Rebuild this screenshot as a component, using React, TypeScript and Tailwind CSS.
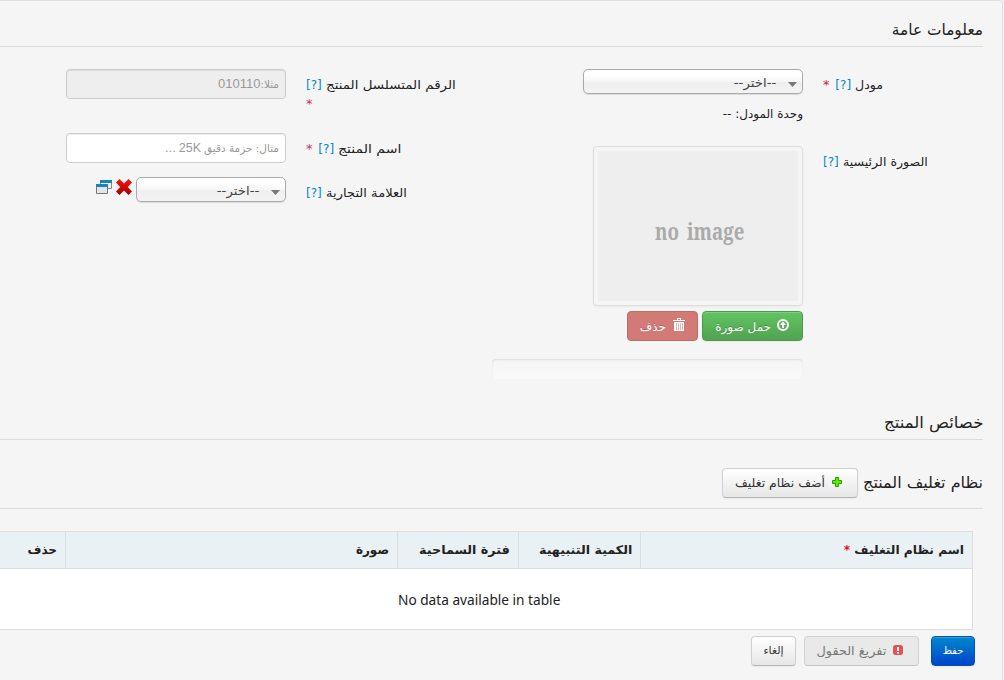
import type { ReactNode } from "react";

function Txt({ children, className = "" }: { children: ReactNode; className?: string }) {
  return <span className={`inline-block whitespace-nowrap ${className}`}>{children}</span>;
}

function Help() {
  return <a className="text-[#0088cc]">[?]</a>;
}

function Star() {
  return <span className="text-[#d8181c]">*</span>;
}

function Select({ className }: { className: string }) {
  return (
    <div
      className={`flex h-[25px] items-center gap-[12px] rounded-[5px] border border-[#aaa] bg-[linear-gradient(#fff_20%,#f6f6f6_50%,#eee_52%,#f4f4f4_100%)] pt-[2px] pr-[5px] text-[#444] shadow-[0_1px_1px_rgba(0,0,0,0.1)] ${className}`}
    >
      <svg width="9" height="5" viewBox="0 0 9 5" className="mt-[3px]">
        <path d="M0 0h9L4.5 5z" fill="#777" />
      </svg>
      <Txt className="origin-right scale-x-[1.11] text-[12px]">--اختر--</Txt>
    </div>
  );
}

export default function App() {
  return (
    <div dir="rtl" className="flex h-[680px] w-[1004px] justify-end overflow-hidden bg-[#f5f5f5] font-['DejaVu_Sans',sans-serif] text-[12px] leading-5 text-[#222]">
      <main className="flex w-[1003px] shrink-0 flex-col rounded-tr-[4px] border-t border-r border-[#e0e0e0]">
        <h2 className="mr-[19px] flex h-[46px] items-center border-b border-[#dcdcdc] pt-[12px] text-[16px]">
          <Txt className="origin-right scale-x-[0.96]">معلومات عامة</Txt>
        </h2>

        <div className="mr-[19px] flex h-[353px] pt-[22px]">
          <section className="flex w-[517px] flex-col">
            <div className="flex h-[77px] gap-5">
              <div dir="ltr" className="w-[160px] pt-[6px]">
                <Txt><span dir="rtl"><Txt className="origin-left scale-x-[1.05]">مودل</Txt> <Help /> <span className="mr-[2px] text-[13px]"><Star /></span></span></Txt>
              </div>
              <div>
                <Select className="w-[220px]" />
                <div className="mt-[10px]"><Txt>وحدة المودل: --</Txt></div>
              </div>
            </div>
            <div className="flex gap-5">
              <div dir="ltr" className="w-[160px] shrink-0 pt-[6px]">
                <Txt><span dir="rtl"><Txt className="origin-left scale-x-[1.05]">الصورة الرئيسية</Txt> <Help /></span></Txt>
              </div>
              <div className="flex flex-col">
                <div className="h-[160px] w-[210px] rounded-[4px] border border-[#ddd] p-[4px] shadow-[0_1px_3px_rgba(0,0,0,0.055)]">
                  <div dir="ltr" className="flex h-full items-center bg-[#eee] pt-[9px] pl-[57px] font-['Noto_Serif','DejaVu_Serif',serif] text-[24px] font-bold text-[#aaa]">
                    <Txt className="origin-left scale-x-[0.78] [word-spacing:4px]">no image</Txt>
                  </div>
                </div>
                <div className="mt-[5px] flex gap-1">
                  <button className="flex h-[30px] w-[101px] items-center gap-[6px] rounded-[4px] border border-[#4a9a4a] bg-[linear-gradient(#62c462,#51a351)] pt-px pr-[13px] text-white shadow-[inset_0_1px_0_rgba(255,255,255,0.2),0_1px_2px_rgba(0,0,0,0.05)] [text-shadow:0_-1px_0_rgba(0,0,0,0.25)]">
                    <svg width="12" height="12" viewBox="0 0 12 12" className="mb-[3px]">
                      <circle cx="6" cy="6" r="5" fill="none" stroke="#fff" strokeWidth="2" />
                      <path d="M6 2.6 9 6H7v3H5V6H3z" fill="#fff" />
                    </svg>
                    <Txt>حمل صورة</Txt>
                  </button>
                  <button className="flex h-[30px] w-[71px] items-center gap-[7px] rounded-[4px] border border-[#c06b67] bg-[#d27a76] pt-px pr-[12px] text-white [text-shadow:0_-1px_0_rgba(0,0,0,0.18)]">
                    <svg width="12" height="14" viewBox="0 0 12 14" className="mb-[3px]" fill="#fff">
                      <path d="M4 0h4v2h4v1H0V2h4zM5 1v1h2V1zM1 4h10v9H1z" fillRule="evenodd" />
                      <path d="M3.500 5v7M5.500 5v7M7.500 5v7M9.500 5v7" stroke="#d27a76" strokeWidth=".6" />
                    </svg>
                    <Txt>حذف</Txt>
                  </button>
                </div>
                <div className="mt-[18px] h-[20px] w-[311px] rounded-[4px] bg-[linear-gradient(#f5f5f5,#f9f9f9)] shadow-[inset_0_1px_2px_rgba(0,0,0,0.1)]" />
              </div>
            </div>
          </section>

          <section className="flex flex-col">
            <div className="flex h-[64px] gap-5">
              <div dir="ltr" className="w-[160px] pt-[6px]">
                <Txt><span dir="rtl"><Txt className="origin-left scale-x-[1.12]">الرقم المتسلسل المنتج</Txt> <Help /></span></Txt>
                <div className="-mt-px text-[13px] text-[#c3325f]">*</div>
              </div>
              <div className="flex h-[30px] w-[220px] items-center rounded-[4px] border border-[#ccc] bg-[#eee] px-[6px] text-[#999] shadow-[inset_0_1px_1px_rgba(0,0,0,0.075)]">
                <Txt className="text-[10.5px]">مثلا:</Txt>
                <Txt className="font-['Liberation_Sans',sans-serif] text-[13px]">010110</Txt>
              </div>
            </div>
            <div className="flex h-[44px] gap-5">
              <div dir="ltr" className="w-[160px] pt-[6px]">
                <Txt><span dir="rtl"><Txt className="origin-left scale-x-[1.17]">اسم المنتج</Txt> <Help /> <span className="mr-[2px] text-[13px] text-[#c3325f]">*</span></span></Txt>
              </div>
              <div className="flex h-[30px] w-[220px] items-center gap-[3px] rounded-[4px] border border-[#ccc] bg-white px-[6px] text-[#999] shadow-[inset_0_1px_1px_rgba(0,0,0,0.075)]">
                <Txt className="text-[10.5px]">مثال: حزمة دقيق</Txt>
                <Txt className="font-['Liberation_Sans',sans-serif] text-[12.5px]">25K</Txt>
                <Txt className="font-['Liberation_Sans',sans-serif] text-[13px]">...</Txt>
              </div>
            </div>
            <div className="flex gap-5">
              <div dir="ltr" className="w-[160px] pt-[6px]">
                <Txt><span dir="rtl"><Txt className="origin-left scale-x-[1.09]">العلامة التجارية</Txt> <Help /></span></Txt>
              </div>
              <div className="flex gap-1">
                <Select className="w-[150px]" />
                <svg width="16" height="16" viewBox="0 0 16 16" className="mt-[2px]">
                  <defs>
                    <linearGradient id="cross" x2="0" y2="1"><stop stopColor="#ff1010" /><stop offset="1" stopColor="#a60000" /></linearGradient>
                  </defs>
                  <path d="M3.5 0 8 4.5 12.5 0 16 3.5 11.8 8 16 12.5 12.5 16 8 11.5 3.5 16 0 12.5 4.2 8 0 3.5z" fill="url(#cross)" />
                </svg>
                <svg width="16" height="14" viewBox="0 0 16 14" className="mt-[3px]">
                  <path d="M4.500.5h11v8h-11z" fill="#eee" stroke="#888" />
                  <path d="M4 0h12v3H4z" fill="#1687b8" />
                  <path d="M.5 4.500h11v9H.5z" fill="#e5e5e5" stroke="#777" />
                  <path d="M0 4h12v3H0z" fill="#1687b8" />
                </svg>
              </div>
            </div>
          </section>
        </div>

        <h2 className="mr-[19px] flex h-[40px] items-center border-b border-[#dcdcdc] pt-[7px] text-[16px]">
          <Txt className="origin-right scale-x-[1.03]">خصائص المنتج</Txt>
        </h2>
        <h2 className="mr-[19px] mt-[28px] flex h-[41px] items-start gap-[5px] border-b border-[#dcdcdc] text-[16px]">
          <Txt className="mt-[5px]">نظام تغليف المنتج</Txt>
          <button className="flex h-[30px] w-[136px] items-center gap-[7px] rounded-[4px] border border-[#d0d0d0] border-b-[#b3b3b3] bg-[linear-gradient(#fff,#e6e6e6)] pr-[15px] text-[12px] text-[#333] shadow-[0_1px_2px_rgba(0,0,0,0.05)]">
            <svg width="10" height="10" viewBox="0 0 10 10" className="mb-[2px]">
              <path d="M3.500.5h3v3h3v3h-3v3h-3v-3h-3v-3h3z" fill="#6be500" stroke="#16a600" />
            </svg>
            <Txt className="origin-right scale-x-[1.035]">أضف نظام تغليف</Txt>
          </button>
        </h2>

        <table className="mt-[22px] mr-[29px] w-[973px] table-fixed border-separate border-spacing-0 border-t border-r border-b border-[#ddd] bg-white">
          <thead>
            <tr className="h-[37px] bg-[#eaf1f5] text-right text-[12px] font-bold [&>th]:border-b [&>th]:border-[#ddd] [&>th]:p-0 [&>th]:pr-2">
              <th className="w-[331px]"><Txt className="origin-right scale-x-[1.02]">اسم نظام التغليف <Star /></Txt></th>
              <th className="w-[122px] border-r"><Txt className="origin-right scale-x-[1.057]">الكمية التنبيهية</Txt></th>
              <th className="w-[121px] border-r"><Txt className="origin-right scale-x-[1.057]">فترة السماحية</Txt></th>
              <th className="w-[332px] border-r"><Txt>صورة</Txt></th>
              <th className="border-r"><Txt>حذف</Txt></th>
            </tr>
          </thead>
          <tbody>
            <tr className="h-[60px]">
              <td colSpan={5} className="p-0 pt-[2px] pr-[14px] text-center font-['Noto_Sans','Open_Sans',sans-serif] text-[14px]"><Txt className="scale-x-[0.976]">No data available in table</Txt></td>
            </tr>
          </tbody>
        </table>

        <div className="mt-[6px] mr-[27px] flex">
          <button className="h-[30px] w-[44px] rounded-[4px] border border-[#0055b3] bg-[linear-gradient(#0088cc,#0044cc)] text-[10px] text-white shadow-[inset_0_1px_0_rgba(255,255,255,0.2),0_1px_2px_rgba(0,0,0,0.05)]"><Txt>حفظ</Txt></button>
          <button className="mr-[12px] flex h-[30px] w-[115px] items-center gap-[7px] rounded-[4px] border border-[#d2d2d2] border-b-[#c3c3c3] bg-[#e9e9e9] pr-[15px] text-[12px] text-[#777]">
            <svg width="10" height="10" viewBox="0 0 10 10" className="mb-[3px]">
              <rect width="10" height="10" rx="2.5" fill="#e05454" />
              <path d="M4 2h2v4H4zM4 7h2v1.500H4z" fill="#fff" />
            </svg>
            <Txt className="origin-right scale-x-[1.07]">تفريغ الحقول</Txt>
          </button>
          <button className="mr-[8px] h-[30px] w-[45px] rounded-[4px] border border-[#d0d0d0] border-b-[#b3b3b3] bg-[linear-gradient(#fff,#e6e6e6)] text-[11px] text-[#333] shadow-[0_1px_2px_rgba(0,0,0,0.05)]"><Txt>إلغاء</Txt></button>
        </div>
      </main>
    </div>
  );
}
